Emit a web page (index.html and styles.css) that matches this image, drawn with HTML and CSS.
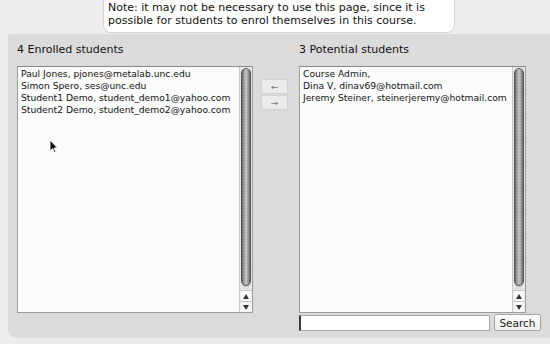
FILE: index.html
```html
<!DOCTYPE html>
<html lang="en">
<head>
    <meta charset="UTF-8">
    <title>Enrol students</title>
    <link rel="stylesheet" href="styles.css">
</head>
<body>
    <div class="note">Note: it may not be necessary to use this page, since it is<br>possible for students to enrol themselves in this course.</div>
    <div class="panel">
        <div class="col col-left">
            <h2>4 Enrolled students</h2>
            <div class="listbox">
                <ul class="items">
                    <li>Paul Jones, pjones@metalab.unc.edu</li>
                    <li>Simon Spero, ses@unc.edu</li>
                    <li>Student1 Demo, student_demo1@yahoo.com</li>
                    <li>Student2 Demo, student_demo2@yahoo.com</li>
                </ul>
                <div class="scroll">
                    <div class="track"><div class="thumb"></div></div>
                    <div class="sbtn up"></div>
                    <div class="sbtn down"></div>
                </div>
            </div>
        </div>
        <div class="moves">
            <button class="move">&larr;</button>
            <button class="move">&rarr;</button>
        </div>
        <div class="col col-right">
            <h2>3 Potential students</h2>
            <div class="listbox">
                <ul class="items">
                    <li>Course Admin,</li>
                    <li>Dina V, dinav69@hotmail.com</li>
                    <li>Jeremy Steiner, steinerjeremy@hotmail.com</li>
                </ul>
                <div class="scroll">
                    <div class="track"><div class="thumb"></div></div>
                    <div class="sbtn up"></div>
                    <div class="sbtn down"></div>
                </div>
            </div>
            <div class="searchrow">
                <input class="search" type="text">
                <button class="go">Search</button>
            </div>
        </div>
    </div>
    <svg class="cursor" width="10" height="15" viewBox="0 0 10 15">
        <path d="M1 1 L1 12 L3.5 9.5 L5.5 14 L7 13.3 L5 9 L8.5 9 Z" fill="#000" stroke="#fff" stroke-width="1"/>
    </svg>
</body>
</html>
```
FILE: styles.css
```css
*{
    margin: 0;
    padding: 0;
    box-sizing: border-box;
}
body{
    background: #eeedee;
    font-family: "DejaVu Sans", sans-serif;
    color: #111;
    overflow: hidden;
}
.note{
    width: 352px;
    height: 33px;
    margin-left: 103px;
    padding: 1px 4px;
    background: #fff;
    border: 1px solid #d4d4d4;
    border-top: none;
    border-radius: 0 0 8px 8px;
    font-size: 11px;
    line-height: 13px;
}
.panel{
    display: flex;
    margin: 1px 0 0 8px;
    padding: 9px 0 7px 9px;
    background: #dcdbdb;
    border-radius: 3px 0 0 9px;
}
.col h2{
    font-size: 11px;
    font-weight: normal;
    line-height: 14px;
    margin-bottom: 9px;
}
.col-left{
    width: 236px;
}
.col-right{
    width: 242px;
    margin-left: 11px;
}
.listbox{
    display: flex;
    height: 247px;
    background: #fcfcfc;
    border: 1px solid #9c9c9c;
    border-top-color: #8a8a8a;
}
.col-right .listbox{
    width: 227px;
}
.items{
    flex: 1;
    list-style: none;
    padding: 1px 3px;
    font-size: 9.2px;
    line-height: 12px;
    white-space: nowrap;
    overflow: hidden;
}
.scroll{
    display: flex;
    flex-direction: column;
    width: 13px;
    border-left: 1px solid #c8c8c8;
    background: #f4f4f4;
}
.track{
    flex: 1;
    display: flex;
    padding: 1px 1px 0;
    background: repeating-linear-gradient(#ececec 0, #ececec 2px, #e0e0e0 2px, #e0e0e0 3px);
}
.thumb{
    flex: 1;
    margin-bottom: 4px;
    border-radius: 6px;
    border: 1px solid #555;
    background:
        repeating-linear-gradient(rgba(255,255,255,.12) 0, rgba(255,255,255,.12) 1px, transparent 1px, transparent 3px),
        linear-gradient(to right, #5e5e5e, #9c9c9c 25%, #c4c4c4 50%, #9c9c9c 75%, #5e5e5e);
    box-shadow: 0 3px 2px -1px #cfcfcf;
}
.sbtn{
    position: relative;
    height: 11px;
    background: linear-gradient(to right, #f0f0f0, #fff 50%, #f0f0f0);
    border-top: 1px solid #c8c8c8;
}
.sbtn:after{
    position: absolute;
    content: "";
    left: 3px;
    top: 3px;
    border-left: 3px solid transparent;
    border-right: 3px solid transparent;
}
.sbtn.up:after{
    border-bottom: 5px solid #333;
}
.sbtn.down:after{
    border-top: 5px solid #333;
}
.moves{
    display: flex;
    flex-direction: column;
    gap: 1px;
    width: 27px;
    margin: 36px 0 0 8px;
}
.move{
    height: 15px;
    background: #ebebeb;
    border: 1px solid #d2d2d2;
    color: #777;
    font-family: "DejaVu Sans", sans-serif;
    font-size: 9px;
    line-height: 12px;
}
.searchrow{
    display: flex;
    gap: 4px;
    margin-top: 1px;
}
.search{
    width: 191px;
    height: 16px;
    margin-top: 1px;
    background: #fff;
    border: 1px solid #a8a8a8;
    border-left: 2px solid #3a3a3a;
}
.go{
    width: 47px;
    height: 17px;
    background: linear-gradient(#fff, #eee);
    border: 1px solid #a4a4a4;
    border-radius: 2px;
    color: #222;
    font-family: "DejaVu Sans", sans-serif;
    font-size: 10.5px;
}
.cursor{
    position: absolute;
    left: 49px;
    top: 139px;
}
```
